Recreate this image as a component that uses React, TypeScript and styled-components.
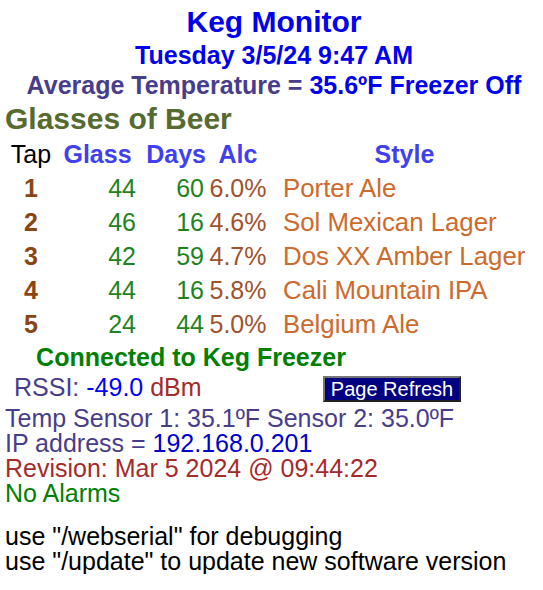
import React from 'react';
import styled, { createGlobalStyle } from 'styled-components';

const GlobalStyle = createGlobalStyle`
  body {
    margin: 0;
    background: #fff;
    font-family: "Liberation Sans", Arial, sans-serif;
  }
`;

interface Keg {
  tap: number;
  glass: number;
  days: number;
  alc: string;
  style: string;
}

const kegs: Keg[] = [
  { tap: 1, glass: 44, days: 60, alc: '6.0%', style: 'Porter Ale' },
  { tap: 2, glass: 46, days: 16, alc: '4.6%', style: 'Sol Mexican Lager' },
  { tap: 3, glass: 42, days: 59, alc: '4.7%', style: 'Dos XX Amber Lager' },
  { tap: 4, glass: 44, days: 16, alc: '5.8%', style: 'Cali Mountain IPA' },
  { tap: 5, glass: 24, days: 44, alc: '5.0%', style: 'Belgium Ale' }
];

export default function App() {
  return (
    <>
      <GlobalStyle />
      <Page>
        <Title>Keg Monitor</Title>
        <SubTitle>Tuesday 3/5/24 9:47 AM</SubTitle>
        <SubTitle>
          <Slate>Average Temperature = </Slate>35.6ºF Freezer Off
        </SubTitle>
        <Section>Glasses of Beer</Section>
        <BeerTable>
          <HeadCell $align="center" $plain>Tap</HeadCell>
          <HeadCell $align="center">Glass</HeadCell>
          <HeadCell $align="right">Days</HeadCell>
          <HeadCell $align="center">Alc</HeadCell>
          <HeadCell $align="center">Style</HeadCell>
          {kegs.map(k => (
            <React.Fragment key={k.tap}>
              <TapCell>{k.tap}</TapCell>
              <CountCell>{k.glass}</CountCell>
              <CountCell>{k.days}</CountCell>
              <AlcCell>{k.alc}</AlcCell>
              <StyleCell>{k.style}</StyleCell>
            </React.Fragment>
          ))}
        </BeerTable>
        <Connected>Connected to Keg Freezer</Connected>
        <RssiRow>
          <Rssi>
            RSSI: <Blue>-49.0</Blue> <Brown>dBm</Brown>
          </Rssi>
          <RefreshButton>Page Refresh</RefreshButton>
        </RssiRow>
        <Info>
          <Line>Temp Sensor 1: 35.1ºF Sensor 2: 35.0ºF</Line>
          <Line>
            IP address = <IpValue>192.168.0.201</IpValue>
          </Line>
          <Line $color="#a52a2a">Revision: Mar 5 2024 @ 09:44:22</Line>
          <Line $color="#008000">No Alarms</Line>
        </Info>
        <Help>
          <Line $color="#000">use "/webserial" for debugging</Line>
          <Line $color="#000">use "/update" to update new software version</Line>
        </Help>
      </Page>
    </>
  );
}

const Page = styled.div`
  width: 543px;
  padding: 4px 0 0 5px;
  box-sizing: border-box;
`;

const Title = styled.div`
  font-size: 30px;
  font-weight: bold;
  line-height: 36px;
  color: #0000ee;
  text-align: center;
`;

const SubTitle = styled.div`
  font-size: 25px;
  font-weight: bold;
  line-height: 30px;
  color: #0000ee;
  text-align: center;
`;

const Slate = styled.span`
  color: #483d8b;
`;

const Section = styled.div`
  font-size: 30px;
  font-weight: bold;
  line-height: 38px;
  color: #556b2f;
`;

const BeerTable = styled.div`
  display: grid;
  grid-template-columns: 52px 81px 68px 64px 269px;
  grid-template-rows: 33px repeat(5, 34px);
  align-items: center;
  font-size: 25px;
`;

const HeadCell = styled.div<{ $align: string; $plain?: boolean }>`
  text-align: ${p => p.$align};
  font-weight: ${p => (p.$plain ? 'normal' : 'bold')};
  color: ${p => (p.$plain ? '#000' : '#4040ee')};
`;

const TapCell = styled.div`
  text-align: center;
  font-weight: bold;
  color: #8b4513;
`;

const CountCell = styled.div`
  text-align: right;
  padding-right: 2px;
  color: #1e841e;
`;

const AlcCell = styled.div`
  text-align: center;
  white-space: nowrap;
  color: #a0522d;
`;

const StyleCell = styled.div`
  padding-left: 13px;
  white-space: nowrap;
  font-size: 25.8px;
  color: #cd6a2c;
`;

const Connected = styled.div`
  width: 372px;
  text-align: center;
  font-size: 25px;
  font-weight: bold;
  line-height: 33px;
  color: #008000;
`;

const RssiRow = styled.div`
  display: flex;
  align-items: center;
  height: 30px;
  margin-bottom: 2px;
  font-size: 25px;
`;

const Rssi = styled.div`
  width: 309px;
  padding-left: 9px;
  margin-top: -4px;
  color: #483d8b;
`;

const Blue = styled.span`
  color: #0000ff;
`;

const Brown = styled.span`
  color: #a52a2a;
`;

const RefreshButton = styled.button`
  width: 138px;
  height: 26px;
  padding: 0;
  background: #000080;
  color: #fff;
  font-family: "Liberation Sans", Arial, sans-serif;
  font-size: 20px;
  border: 2px outset #767676;
`;

const Info = styled.div`
  font-size: 25px;
  line-height: 25px;
`;

const Line = styled.div<{ $color?: string }>`
  color: ${p => p.$color || '#483d8b'};
`;

const IpValue = styled.span`
  color: #0000cd;
`;

const Help = styled.div`
  margin-top: 18px;
  font-size: 25px;
  line-height: 25px;
`;
